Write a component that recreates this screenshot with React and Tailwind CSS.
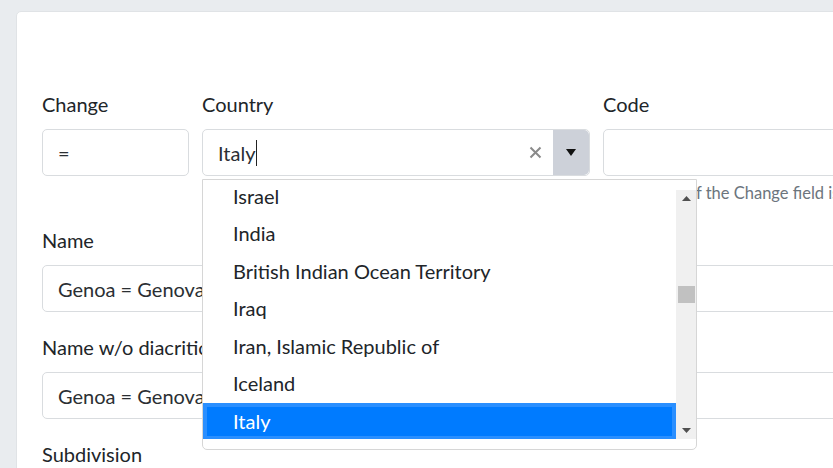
import React from "react";

const items = [
  "Israel",
  "India",
  "British Indian Ocean Territory",
  "Iraq",
  "Iran, Islamic Republic of",
  "Iceland",
];

function Label({ children }) {
  return (
    <label className="block h-[30px] leading-[30px] mb-[10px] text-[20px] text-[#212529] whitespace-nowrap">
      {children}
    </label>
  );
}

function Input({ value, className = "" }) {
  return (
    <div
      className={
        "h-[47px] border border-[#d9dcdf] rounded-[5px] bg-white px-[15px] flex items-center text-[20px] text-[#2b2f33] whitespace-nowrap overflow-hidden " +
        className
      }
    >
      {value}
    </div>
  );
}

export default function App() {
  return (
    <div
      className="w-[833px] h-[468px] overflow-hidden bg-[#e9ecef] pl-[16px] pt-[11px]"
      style={{ fontFamily: 'Lato, "Noto Sans", sans-serif' }}
    >
      <div className="w-[1100px] h-[600px] bg-white border border-[#e0e3e6] rounded-[5px] p-[25px] pt-[77px]">
        {/* Row 1 */}
        <div className="flex gap-[13px] mb-[20px]">
          <div className="w-[147px] shrink-0">
            <Label>Change</Label>
            <Input value="=" />
          </div>
          <div className="w-[388px] shrink-0 relative">
            <Label>Country</Label>
            <div className="h-[47px] flex border border-[#d9dcdf] rounded-[5px] bg-white">
              <div className="flex-1 flex items-center pl-[15px] text-[20px] text-[#2b2f33]">
                <span>Italy</span>
                <span className="w-px h-[26px] bg-[#222] ml-[1px]" />
              </div>
              <div className="w-[36px] flex items-center justify-center">
                <svg width="13" height="13" viewBox="0 0 13 13">
                  <path d="M1.5 1.5 L11.5 11.5 M11.5 1.5 L1.5 11.5" stroke="#8a8a8a" strokeWidth="2" />
                </svg>
              </div>
              <div className="w-[36px] bg-[#cdd1d9] rounded-r-[5px] flex items-center justify-center">
                <svg width="10" height="7" viewBox="0 0 10 7">
                  <path d="M0 0 L10 0 L5 7 Z" fill="#111" />
                </svg>
              </div>
            </div>
            {/* Dropdown */}
            <div className="absolute left-0 top-[90px] w-[495px] h-[271px] z-10 bg-white border border-[#d6d6d6] rounded-b-[5px] py-[10px] flex">
              <div className="flex-1 overflow-hidden">
                <div className="-mt-[12.5px]">
                  {items.map((it) => (
                    <div
                      key={it}
                      className="h-[37.5px] leading-[37.5px] pl-[30px] text-[20px] text-[#212529] whitespace-nowrap"
                    >
                      {it}
                    </div>
                  ))}
                  <div className="h-[37.5px] leading-[29.5px] pl-[26px] text-[20px] text-white bg-[#007bff] border-[#2a8fff] border-x-[4px] border-t-[4px] border-b-[4px] whitespace-nowrap">
                    Italy
                  </div>
                </div>
              </div>
              <div className="w-[20px] bg-[#f0f0f0] flex flex-col items-center">
                <div className="h-[17px] flex items-center justify-center">
                  <svg width="9" height="5" viewBox="0 0 9 5">
                    <path d="M0 5 L9 5 L4.5 0 Z" fill="#505050" />
                  </svg>
                </div>
                <div className="flex-1 w-full relative">
                  <div className="absolute left-[2px] right-[1px] top-[79px] h-[17px] bg-[#c1c1c1]" />
                </div>
                <div className="h-[17px] flex items-center justify-center">
                  <svg width="9" height="5" viewBox="0 0 9 5">
                    <path d="M0 0 L9 0 L4.5 5 Z" fill="#505050" />
                  </svg>
                </div>
              </div>
            </div>
          </div>
          <div className="w-[400px] shrink-0">
            <Label>Code</Label>
            <Input value="" />
            <div className="mt-[5px] h-[24px] leading-[24px] text-[16.5px] text-[#6c757d] whitespace-nowrap">
              Leave blank if the Change field is not set
            </div>
          </div>
        </div>
        {/* Name */}
        <div className="mb-[20px]">
          <Label>Name</Label>
          <Input value="Genoa = Genova" />
        </div>
        <div className="mb-[20px]">
          <Label>Name w/o diacritics</Label>
          <Input value="Genoa = Genova" />
        </div>
        <div>
          <Label>Subdivision</Label>
        </div>
      </div>
    </div>
  );
}
